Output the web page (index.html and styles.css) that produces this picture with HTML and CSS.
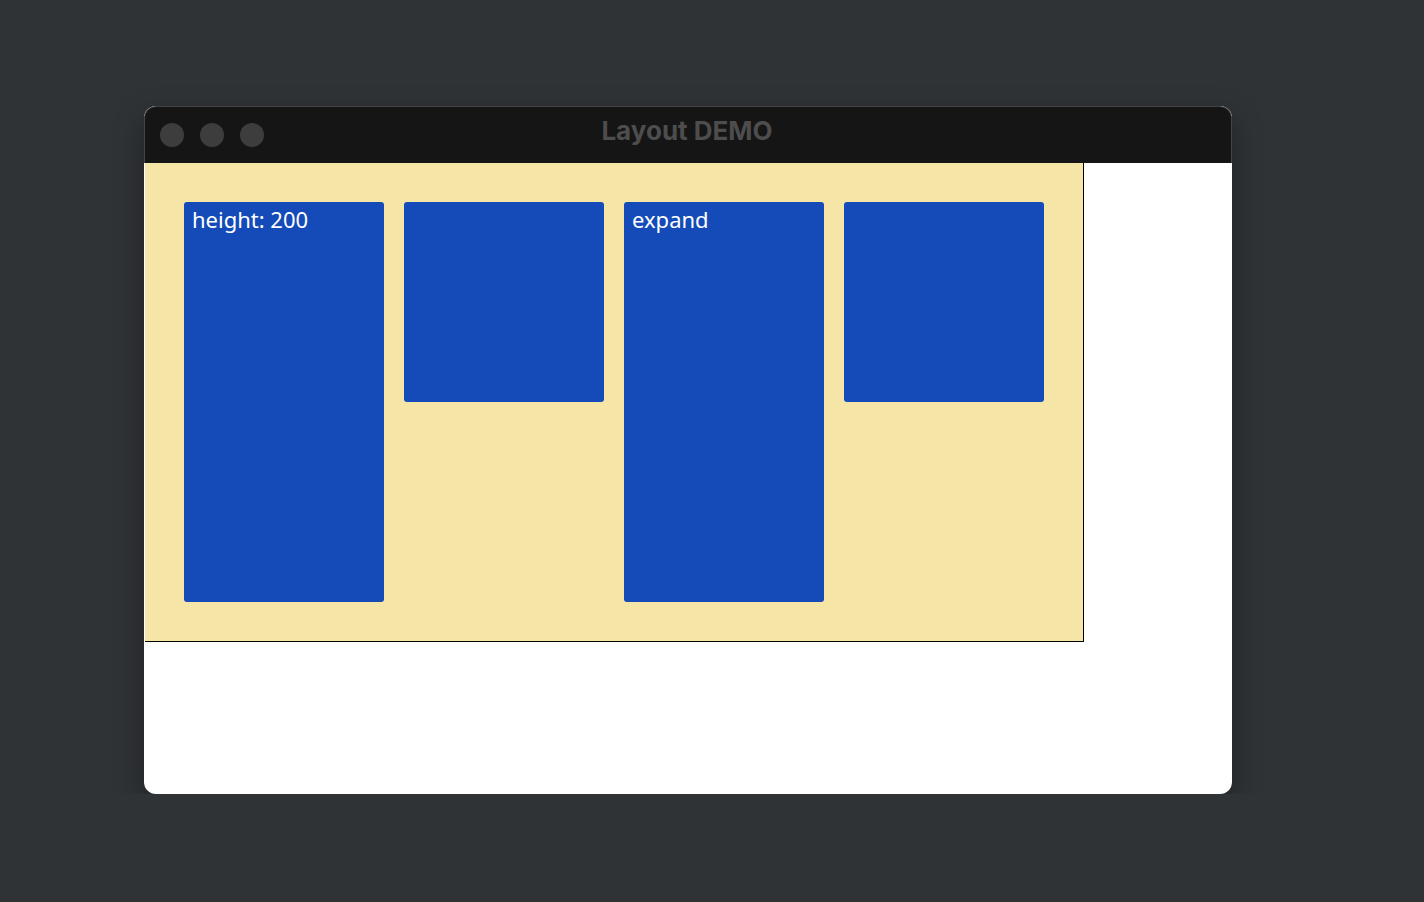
FILE: index.html
```html
<!DOCTYPE html>
<html lang="en">
<head>
    <meta charset="UTF-8">
    <meta name="viewport" content="width=device-width, initial-scale=1.0">
    <title>Layout DEMO</title>
    <link rel="stylesheet" href="styles.css">
</head>
<body>
    <!-- Window -->
    <div class="window">
        <div class="titlebar">
            <div class="lights">
                <span class="light"></span>
                <span class="light"></span>
                <span class="light"></span>
            </div>
            <div class="title">Layout DEMO</div>
        </div>

        <!-- Content -->
        <div class="content">
            <div class="row">
                <div class="box tall">height: 200</div>
                <div class="box"></div>
                <div class="box tall">expand</div>
                <div class="box"></div>
            </div>
        </div>
    </div>
</body>
</html>
```

FILE: styles.css
```css
/* General Styles */
body {
    margin: 0;
    padding: 0;
    background-color: #303336;
    font-family: "Noto Sans", "Open Sans", sans-serif;
}
.window {
    position: relative;
    width: 1088px;
    height: 688px;
    margin: 106px 0 0 144px;
    background: #fff;
    border-radius: 12px;
    overflow: hidden;
    box-shadow: 0 12px 30px rgba(0, 0, 0, 0.35);
    display: flex;
    flex-direction: column;
}
.titlebar {
    position: relative;
    height: 57px;
    flex: none;
    background: #151515;
    border: 1px solid #444;
    border-bottom: none;
    border-radius: 12px 12px 0 0;
    box-sizing: border-box;
    display: flex;
    align-items: center;
    justify-content: center;
}
.lights {
    position: absolute;
    left: 15px;
    top: 16px;
    display: flex;
    gap: 16px;
}
.light {
    width: 24px;
    height: 24px;
    border-radius: 50%;
    background: #3d3d3d;
}
.title {
    font-family: Inter, "Noto Sans", sans-serif;
    font-weight: 700;
    font-size: 26px;
    color: #4d4d4d;
    margin-top: -10px;
    margin-right: 2px;
}
.content {
    width: 939px;
    height: 479px;
    margin-left: 1px;
    background: #f5e6a7;
    border-right: 1px solid #000;
    border-bottom: 1px solid #000;
    box-sizing: border-box;
    padding: 39px 0 0 39px;
}
.row {
    display: flex;
    gap: 20px;
    align-items: flex-start;
}
.box {
    width: 200px;
    height: 200px;
    background: #144bb8;
    border-radius: 3px;
    color: #fff;
    font-size: 22px;
    line-height: 34px;
    padding: 0 8px;
    box-sizing: border-box;
}
.box.tall {
    height: 400px;
}
```
